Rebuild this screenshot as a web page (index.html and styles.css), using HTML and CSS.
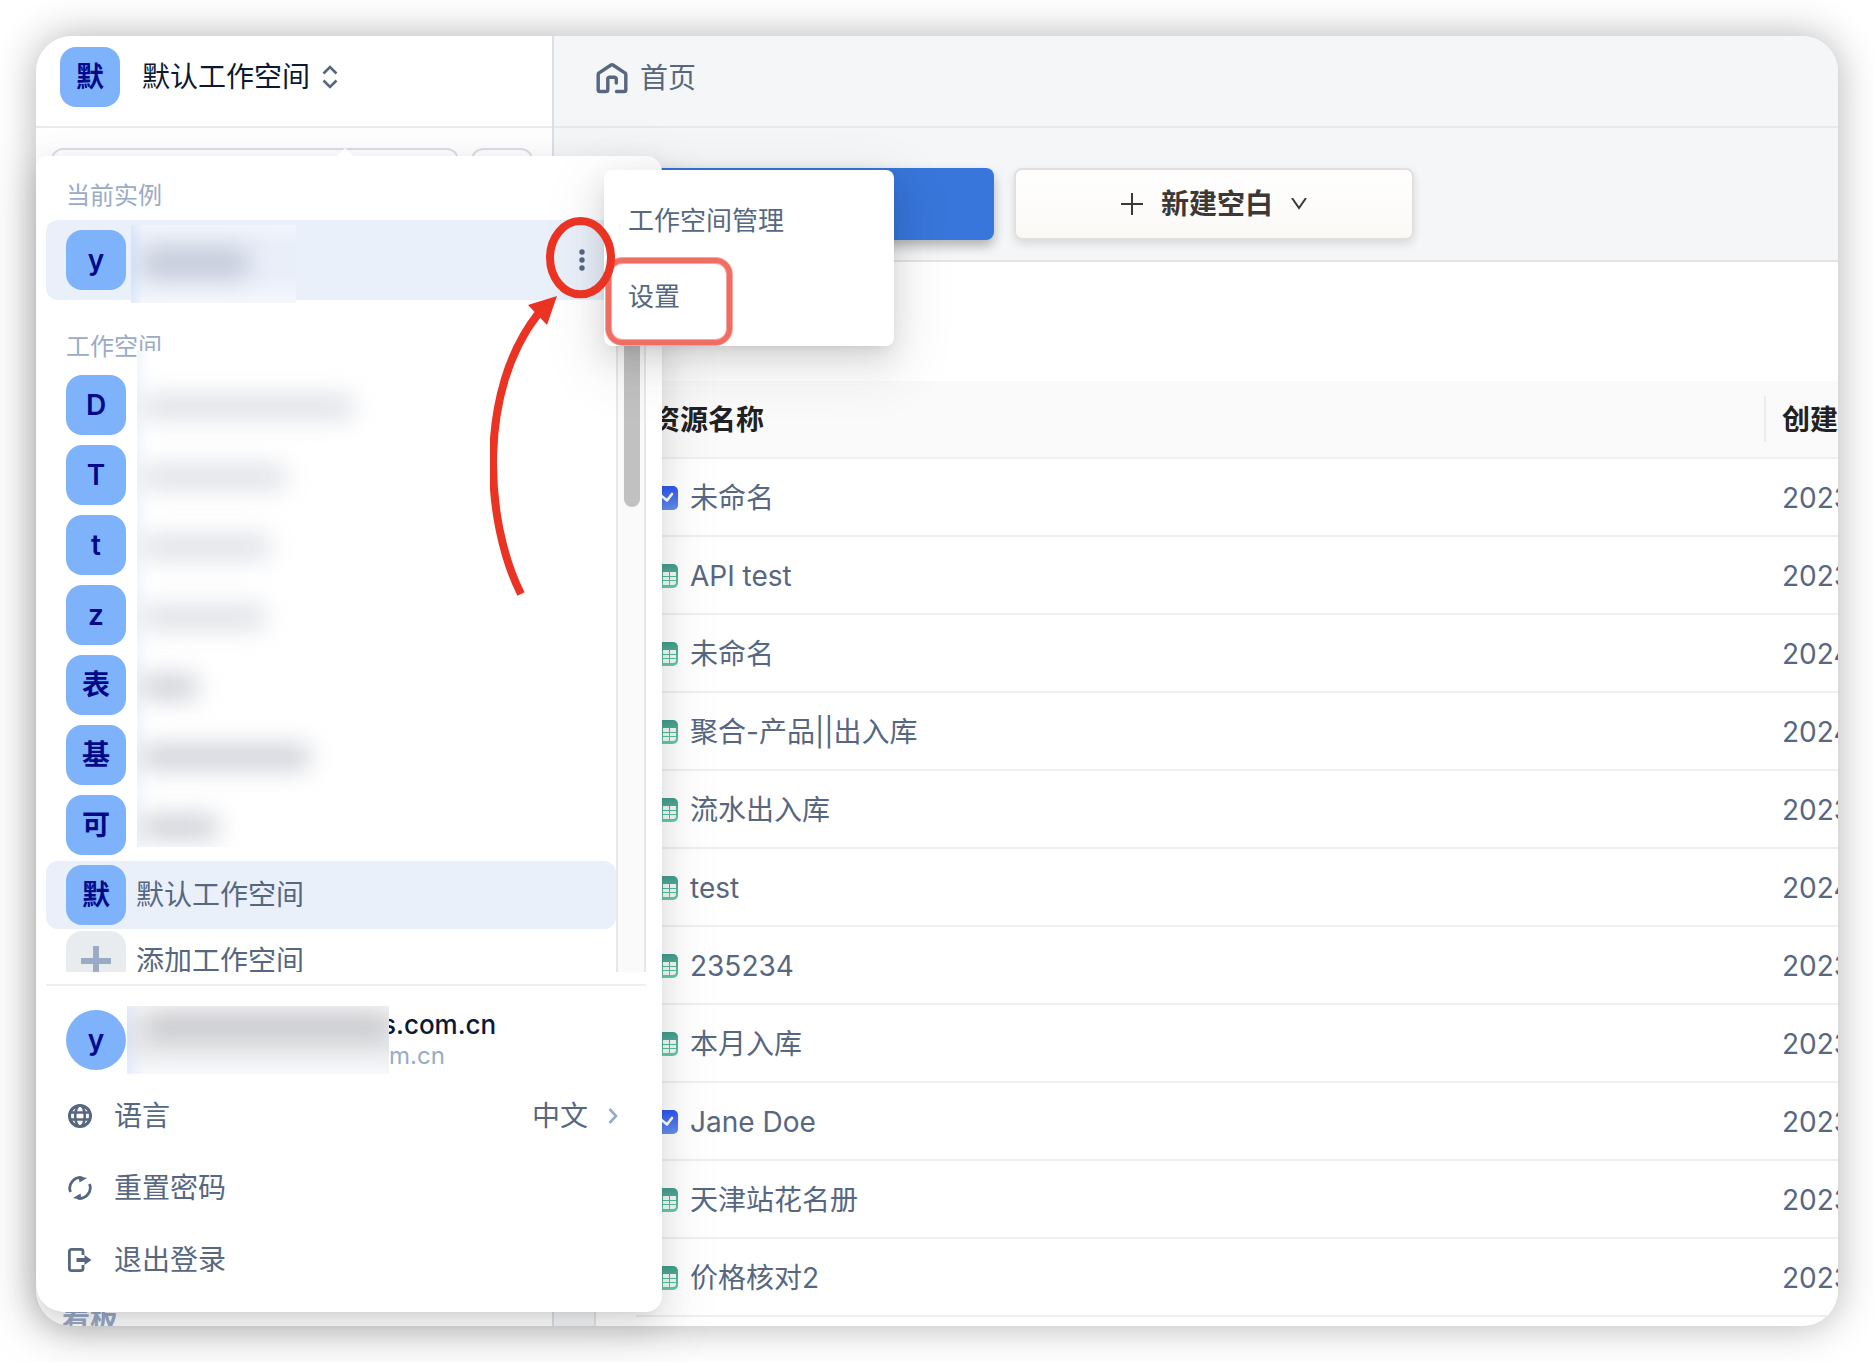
FILE: index.html
```html
<!DOCTYPE html>
<html lang="zh-CN">
<head>
<meta charset="utf-8">
<meta name="viewport" content="width=device-width, initial-scale=1">
<title>首页</title>
<link rel="stylesheet" href="styles.css">
</head>
<body>
<svg class="defs" aria-hidden="true">
  <defs>
    <linearGradient id="g-sheet" x1="0" y1="0" x2="0" y2="1"><stop offset="0" stop-color="#449a8e"/><stop offset="1" stop-color="#63d0a3"/></linearGradient>
    <linearGradient id="g-board" x1="0" y1="0" x2="0" y2="1"><stop offset="0" stop-color="#2f54eb"/><stop offset="1" stop-color="#6590f0"/></linearGradient>
    <symbol id="i-sheet" viewBox="0 0 26 24">
      <rect width="26" height="24" rx="5" fill="url(#g-sheet)"/>
      <path fill="#f4f8f7" d="M3 8h7v4H3zM11 8h6v4h-6zM18 8h6v4h-6zM3 13h7v3H3zM11 13h6v3h-6zM18 13h6v3h-6zM3 17h7v4H5a2 2 0 0 1-2-2zM11 17h6v4h-6zM18 17h6v1a3 3 0 0 1-3 3h-3z"/>
    </symbol>
    <symbol id="i-board" viewBox="0 0 26 24">
      <rect width="26" height="24" rx="5" fill="url(#g-board)"/>
      <path fill="none" stroke="#fff" stroke-width="2.600" stroke-linecap="round" stroke-linejoin="round" d="M4 14l5-4.500 6 5L20 8"/>
    </symbol>
  </defs>
</svg>

<div class="window">
  <aside class="sidebar">
    <button class="switcher" type="button">
      <span class="avatar">默</span>
      <span class="switcher-name">默认工作空间</span>
      <svg width="16" height="24" viewBox="0 0 16 24" fill="none" stroke="#56677f" stroke-width="2.600"><path d="M1.500 8.500L8 2l6.500 6.500M1.500 15.500L8 22l6.500-6.500"/></svg>
    </button>
    <div class="search">
      <input class="search-box" type="search" aria-label="搜索">
      <button class="search-add" type="button" aria-label="新建"></button>
    </div>
    <p class="sidebar-section">看板</p>
  </aside>

  <main class="main">
    <header class="topbar">
      <svg width="32" height="32" viewBox="0 0 32 32" fill="none" stroke="#56677f" stroke-width="3.400" stroke-linecap="round" stroke-linejoin="round"><path d="M20.500 29.500H28a1.800 1.800 0 0 0 1.800-1.800V12.500a2 2 0 0 0-1-1.700L17 3a2 2 0 0 0-2 0L3.200 10.800a2 2 0 0 0-1 1.700v15.200A1.800 1.800 0 0 0 4 29.500h6a1.800 1.800 0 0 0 1.800-1.800V17a1.800 1.800 0 0 1 1.800-1.800H18a2.300 2.300 0 0 1 2.300 2.300V21"/></svg>
      <span>首页</span>
    </header>
    <div class="actions">
      <button class="btn btn-primary" type="button" aria-label="新建"></button>
      <button class="btn btn-plain" type="button">
        <svg width="22" height="22" viewBox="0 0 22 22" stroke="#3b3836" stroke-width="2"><path d="M11 0v22M0 11h22"/></svg>
        <span>新建空白</span>
        <svg width="16" height="12" viewBox="0 0 16 12" fill="none" stroke="#3b3836" stroke-width="2"><path d="M1 0l7 10 7-10"/></svg>
      </button>
    </div>
    <section class="card">
      <table class="files">
        <colgroup><col><col class="col-date"></colgroup>
        <thead><tr><th>资源名称</th><th>创建</th></tr></thead>
        <tbody>
          <tr><td><a href="#"><svg class="kind"><use href="#i-board"/></svg>未命名</a></td><td>2023</td></tr>
          <tr><td><a href="#"><svg class="kind"><use href="#i-sheet"/></svg>API test</a></td><td>2023</td></tr>
          <tr><td><a href="#"><svg class="kind"><use href="#i-sheet"/></svg>未命名</a></td><td>2024</td></tr>
          <tr><td><a href="#"><svg class="kind"><use href="#i-sheet"/></svg>聚合-产品||出入库</a></td><td>2024</td></tr>
          <tr><td><a href="#"><svg class="kind"><use href="#i-sheet"/></svg>流水出入库</a></td><td>2023</td></tr>
          <tr><td><a href="#"><svg class="kind"><use href="#i-sheet"/></svg>test</a></td><td>2024</td></tr>
          <tr><td><a href="#"><svg class="kind"><use href="#i-sheet"/></svg>235234</a></td><td>2023</td></tr>
          <tr><td><a href="#"><svg class="kind"><use href="#i-sheet"/></svg>本月入库</a></td><td>2023</td></tr>
          <tr><td><a href="#"><svg class="kind"><use href="#i-board"/></svg>Jane Doe</a></td><td>2023</td></tr>
          <tr><td><a href="#"><svg class="kind"><use href="#i-sheet"/></svg>天津站花名册</a></td><td>2023</td></tr>
          <tr><td><a href="#"><svg class="kind"><use href="#i-sheet"/></svg>价格核对2</a></td><td>2023</td></tr>
        </tbody>
      </table>
    </section>
  </main>

  <div class="popover">
    <h2 class="group-label">当前实例</h2>
    <div class="instance">
      <span class="avatar">y</span>
      <span class="redact redact-instance"><i></i></span>
      <button class="more" type="button" aria-label="更多"><svg width="8" height="24" viewBox="0 0 8 24" fill="#56677f"><circle cx="4" cy="4" r="2.700"/><circle cx="4" cy="12" r="2.700"/><circle cx="4" cy="20" r="2.700"/></svg></button>
    </div>

    <div class="scroller">
      <div class="spaces">
        <h2 class="group-label">工作空间</h2>
        <ul class="space-list">
          <li><button class="space" type="button"><span class="avatar">D</span></button></li>
          <li><button class="space" type="button"><span class="avatar">T</span></button></li>
          <li><button class="space" type="button"><span class="avatar">t</span></button></li>
          <li><button class="space" type="button"><span class="avatar">z</span></button></li>
          <li><button class="space" type="button"><span class="avatar">表</span></button></li>
          <li><button class="space" type="button"><span class="avatar">基</span></button></li>
          <li><button class="space" type="button"><span class="avatar">可</span></button></li>
          <li><button class="space space-active" type="button"><span class="avatar">默</span><span>默认工作空间</span></button></li>
          <li><button class="space space-add" type="button"><span class="avatar avatar-add"><svg width="30" height="30" viewBox="0 0 30 30" stroke="#9aabc6" stroke-width="6"><path d="M15 0v30M0 15h30"/></svg></span><span>添加工作空间</span></button></li>
        </ul>
        <div class="redact redact-list">
          <i style="width:212px"></i>
          <i style="width:144px"></i>
          <i style="width:128px"></i>
          <i style="width:124px"></i>
          <i class="dense" style="width:56px"></i>
          <i class="dense" style="width:168px"></i>
          <i class="dense" style="width:76px"></i>
        </div>
      </div>
      <div class="track"><div class="thumb"></div></div>
    </div>

    <div class="account">
      <span class="avatar avatar-round">y</span>
      <span class="redact redact-account"><i></i></span>
      <div class="account-text">
        <strong>s.com.cn</strong>
        <small>m.cn</small>
      </div>
    </div>

    <button class="entry" type="button">
      <svg width="24" height="24" viewBox="0 0 24 24" fill="none" stroke="#56677f" stroke-width="2.600"><circle cx="12" cy="12" r="10.500" stroke-width="3"/><ellipse cx="12" cy="12" rx="4.800" ry="10.500"/><path d="M2 8.500h20M2 15.500h20"/></svg>
      <span>语言</span>
      <span class="entry-value">中文</span>
      <svg width="10" height="18" viewBox="0 0 10 18" fill="none" stroke="#9aabc6" stroke-width="2.600"><path d="M1.500 2L8 9l-6.500 7"/></svg>
    </button>
    <button class="entry" type="button">
      <svg width="24" height="24" viewBox="0 0 24 24" fill="none" stroke="#56677f" stroke-width="2.800"><path d="M2.500 16A10.500 10.500 0 0 1 14 1.800M21.500 8A10.500 10.500 0 0 1 10 22.200"/><path fill="#56677f" stroke="none" d="M10.500 0L19 2l-7.500 4.500zM13.500 24L5 22l7.500-4.500z"/></svg>
      <span>重置密码</span>
    </button>
    <button class="entry" type="button">
      <svg width="24" height="24" viewBox="0 0 24 24" fill="none" stroke="#56677f" stroke-width="2.800"><path d="M15 7V3.300A2 2 0 0 0 13 1.400H3.400a2 2 0 0 0-2 2v17.200a2 2 0 0 0 2 2H13a2 2 0 0 0 2-2V17"/><path fill="#56677f" stroke="none" d="M8.500 10h8V7l7 5-7 5v-3h-8z"/></svg>
      <span>退出登录</span>
    </button>
  </div>

  <div class="submenu">
    <button type="button">工作空间管理</button>
    <button type="button">设置</button>
  </div>

  <svg class="marks" width="250" height="390" viewBox="490 216 250 390" fill="none" aria-hidden="true">
    <rect x="608.500" y="260.500" width="121" height="82" rx="14" stroke="#f6a69e" stroke-width="7"/>
    <rect x="608.500" y="260.500" width="121" height="82" rx="14" stroke="#ef6d62" stroke-width="5"/>
    <ellipse cx="580.500" cy="257.700" rx="30.500" ry="36.600" stroke="#ea3323" stroke-width="8"/>
    <path d="M521 594C484 520 478 390 538 314" stroke="#ea3323" stroke-width="8"/>
    <path d="M557 296l-29 9 19 20z" fill="#ea3323"/>
  </svg>
</div>
</body>
</html>
```

FILE: styles.css
```css
* { box-sizing: border-box; }

body {
  margin: 0;
  padding: 36px;
  height: 100vh;
  overflow: hidden;
  background: #fff;
  color: #56677f;
  font: 28px/40px Inter, "Noto Sans CJK SC", sans-serif;
}

button, input { font: inherit; color: inherit; margin: 0; }
button { border: 0; padding: 0; background: none; text-align: left; cursor: pointer; }
h2, p, ul { margin: 0; padding: 0; }
ul { list-style: none; }
svg { flex: none; display: block; }
.defs { position: absolute; width: 0; height: 0; }

.window {
  position: relative;
  display: flex;
  height: 100%;
  border-radius: 36px;
  box-shadow: 0 0 40px rgba(0, 0, 0, .3);
}

/* Sidebar */
.sidebar {
  flex: none;
  display: flex;
  flex-direction: column;
  width: 518px;
  overflow: hidden;
  background: #fff;
  border-right: 2px solid #dcdfe9;
  border-radius: 36px 0 0 36px;
}
.switcher {
  display: flex;
  align-items: center;
  height: 92px;
  padding: 11px 24px 19px;
  border-bottom: 2px solid #ececee;
  color: #0b1a33;
}
.switcher-name { margin: 0 12px 0 22px; }
.search { display: flex; gap: 12px; padding: 20px 19px 0 15px; }
.search-box, .search-add {
  height: 64px;
  border: 2px solid #dcdfe9;
  border-radius: 12px;
  background: #fff;
}
.search-box { flex: 1; min-width: 0; }
.search-add { width: 62px; }
.sidebar-section {
  margin: auto 0 -14px;
  padding-left: 26px;
  color: #9aabc6;
  font-weight: 600;
}

.avatar {
  flex: none;
  display: flex;
  align-items: center;
  justify-content: center;
  width: 60px;
  height: 60px;
  border-radius: 16px;
  background: #7eb3fb;
  color: #00098a;
  font-weight: 600;
}
.avatar-round { border-radius: 50%; }
.avatar-add { background: #e8ecef; }

/* Main area */
.main {
  flex: 1;
  min-width: 0;
  display: flex;
  flex-direction: column;
  overflow: hidden;
  background: #f4f6f8;
  border-radius: 0 36px 36px 0;
}
.topbar {
  flex: none;
  display: flex;
  align-items: center;
  gap: 12px;
  height: 92px;
  padding: 0 42px 6px;
  border-bottom: 2px solid #e6e8eb;
}
.actions { flex: none; display: flex; gap: 20px; padding: 40px 40px 20px; }
.btn {
  display: flex;
  align-items: center;
  justify-content: center;
  gap: 18px;
  width: 400px;
  height: 72px;
  border-radius: 8px;
}
.btn-primary { background: #3876db; box-shadow: 0 6px 12px rgba(0, 0, 0, .28); }
.btn-plain {
  border: 2px solid #e3dfdd;
  background: linear-gradient(#fff, #fbf9f6);
  box-shadow: 0 4px 10px rgba(0, 0, 0, .12);
  color: #3b3836;
  font-weight: 700;
}
.card {
  flex: 1;
  min-height: 0;
  margin-left: 40px;
  padding: 119px 0 0 40px;
  border: 2px solid #e3e4e6;
  border-width: 2px 0 0 2px;
  background: #fff;
}

.files { width: 100%; table-layout: fixed; border-collapse: separate; border-spacing: 0; }
.col-date { width: 72px; }
.files th, .files td {
  height: 78px;
  padding: 1px 0 0 16px;
  border-bottom: 2px solid #eeeff0;
  text-align: left;
  white-space: nowrap;
  overflow: hidden;
}
.files th { background: #fafafa; color: #222; font-weight: 600; }
.files th:first-child {
  background: linear-gradient(#ececec, #ececec) right center / 2px 46px no-repeat #fafafa;
}
.files a { display: flex; align-items: center; gap: 12px; color: inherit; text-decoration: none; }
.kind { width: 26px; height: 24px; }

/* Workspace popover */
.popover {
  position: absolute;
  top: 120px;
  bottom: 14px;
  left: 0;
  width: 626px;
  display: flex;
  flex-direction: column;
  padding: 16px 16px 16px 10px;
  border-radius: 10px 16px 16px 28px;
  background: #fff;
  box-shadow: 0 12px 32px rgba(0, 0, 0, .1), 0 6px 12px -8px rgba(0, 0, 0, .12), 0 18px 56px 16px rgba(0, 0, 0, .05);
}
.popover::before {
  content: "";
  position: absolute;
  top: -8px;
  left: 301px;
  border: solid transparent;
  border-width: 0 8px 8px;
  border-bottom-color: #fff;
}
.group-label {
  padding: 2px 0 2px 20px;
  color: #9aabc6;
  font-size: 24px;
  font-weight: 400;
  line-height: 44px;
}
.instance {
  flex: none;
  display: flex;
  align-items: center;
  height: 80px;
  padding: 0 60px 0 20px;
  border-radius: 12px;
  background: #e9f0fa;
}
.more { margin-left: auto; }

.scroller { flex: 1; min-height: 0; display: flex; margin-top: 23px; overflow: hidden; }
.spaces { position: relative; flex: 1; min-width: 0; }
.space-list { display: flex; flex-direction: column; gap: 2px; }
.space {
  display: flex;
  align-items: center;
  gap: 10px;
  width: 100%;
  height: 68px;
  padding: 0 20px;
  border-radius: 12px;
}
.space-active { background: #e9f0fa; }
.space-add { height: 60px; }
.track {
  flex: none;
  width: 30px;
  padding-left: 6px;
  border: solid #e8e8e8;
  border-width: 0 2px;
  background: #fafafa;
}
.thumb { width: 16px; height: 184px; border-radius: 8px; background: #c1c1c1; }

/* Blurred-out names */
.redact { display: block; overflow: hidden; }
.redact i { display: block; filter: blur(12px); }
.redact-instance {
  width: 165px;
  height: 78px;
  margin: 8px 0 0 5px;
  padding: 24px 0 0 12px;
  background: linear-gradient(90deg, rgba(190, 212, 250, .4), transparent 12px), linear-gradient(#f2f5fc, #e9eef9 20px, #e9eef9 50px, #f5f7fc);
}
.redact-instance i { width: 104px; height: 28px; background: #c2c8d6; }
.redact-list {
  position: absolute;
  top: 28px;
  left: 91px;
  width: 300px;
  height: 496px;
  padding-top: 44px;
  background: linear-gradient(90deg, #f2f6fe, #fff 14px);
}
.redact-list i { height: 24px; margin: 0 0 46px 4px; background: #dde0e6; }
.redact-list .dense { background: #cccfd6; }
.redact-account {
  position: relative;
  flex: none;
  width: 262px;
  height: 68px;
  margin-left: 1px;
  padding: 10px 0 0 20px;
  background: linear-gradient(90deg, rgba(205, 222, 252, .4), transparent 16px), linear-gradient(#f4f4f5, #e9eaec 20px, #e9eaec 40px, #f7f8fb);
}
.redact-account i { height: 22px; background: #c4c5c9; }

.account {
  flex: none;
  display: flex;
  align-items: center;
  height: 96px;
  margin-top: 12px;
  padding: 14px 20px 0;
  border-top: 2px solid #eeeff0;
}
.account-text { display: flex; flex-direction: column; margin-left: -7px; }
.account-text strong { color: #0b1a33; font-size: 26px; font-weight: 500; line-height: 32px; }
.account-text small { padding-left: 7px; color: #9aabc6; font-size: 24px; line-height: 30px; }

.entry { flex: none; display: flex; align-items: center; height: 72px; padding: 0 28px 0 22px; }
.entry span { margin-left: 22px; }
.entry .entry-value { margin: 0 20px 0 auto; }

.submenu {
  position: absolute;
  top: 134px;
  left: 568px;
  display: flex;
  flex-direction: column;
  width: 290px;
  padding: 13px 0 11px;
  border-radius: 8px;
  background: #fff;
  box-shadow: 0 12px 32px rgba(0, 0, 0, .12), 0 6px 12px -8px rgba(0, 0, 0, .14), 0 18px 56px 16px rgba(0, 0, 0, .06);
}
.submenu button { height: 76px; padding: 0 24px; font-size: 26px; }

.marks { position: absolute; top: 180px; left: 454px; }
```
